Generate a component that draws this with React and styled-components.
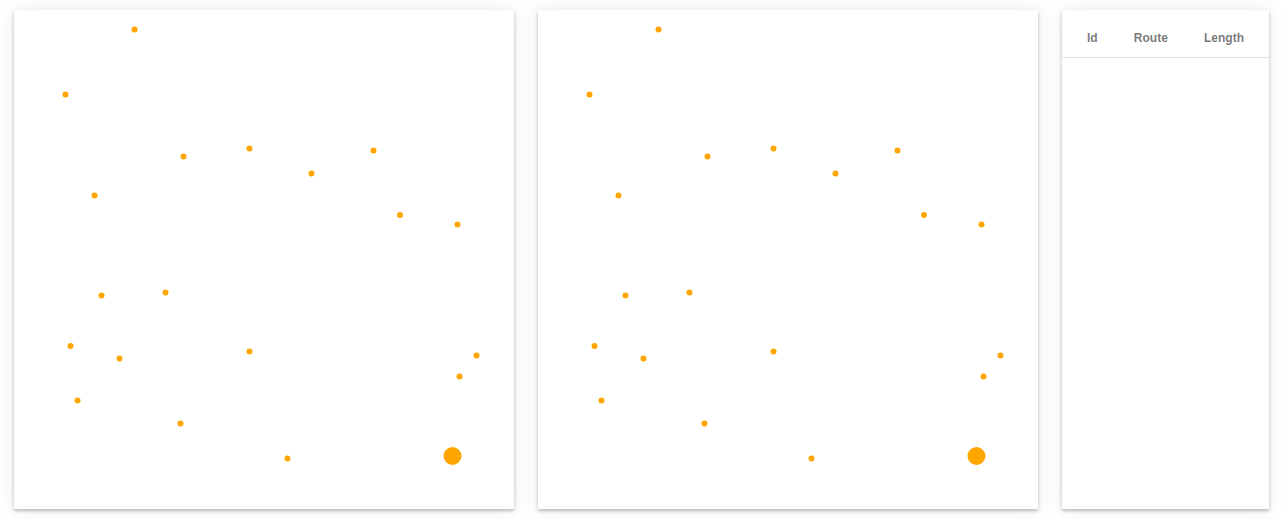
import React from "react";
import styled, { createGlobalStyle } from "styled-components";

const Global = createGlobalStyle`
  html, body { margin: 0; padding: 0; background: #ffffff; }
  body { font-family: "Liberation Sans", Arial, sans-serif; }
`;

const Page = styled.div`
  display: flex;
  align-items: flex-start;
  gap: 24px;
  padding: 10px 14px;
`;

const Paper = styled.div`
  background: #ffffff;
  box-shadow: 0 2px 3px rgba(0, 0, 0, 0.22), 0 1px 6px rgba(0, 0, 0, 0.06), 0 0 22px rgba(0, 0, 0, 0.07);
  width: ${(p) => p.$w}px;
  height: 499px;
  flex: none;
`;

const Canvas = styled.svg`
  display: block;
`;

const HeaderRow = styled.div`
  display: flex;
  justify-content: space-between;
  align-items: center;
  box-sizing: border-box;
  height: 48px;
  padding: 8px 25px 0 25px;
  border-bottom: 1px solid #e0e0e0;
`;

const HeadCell = styled.span`
  font-family: "Liberation Sans", Arial, sans-serif;
  font-size: 12px;
  font-weight: 700;
  color: rgba(0, 0, 0, 0.54);
`;

const points = [
  [120.5, 19.5], [51.5, 84.5], [169.5, 146.5], [235.5, 138.5], [297.5, 163.5],
  [359.5, 140.5], [80.5, 185.5], [386, 205], [443.5, 214.5], [87.5, 285.5],
  [151.5, 282.5], [56.5, 336], [105.5, 348.5], [235.5, 341.5], [462.5, 345.5],
  [445.5, 366.5], [63.5, 390.5], [166.5, 413.5], [273.5, 448.5],
];

function Map() {
  return (
    <Paper $w={500}>
      <Canvas width="500" height="499" viewBox="0 0 500 499">
        {points.map(([x, y], i) => (
          <circle key={i} cx={x} cy={y} r="3" fill="#FFA500" />
        ))}
        <circle cx={438.5} cy={446} r="9" fill="#FFA500" />
      </Canvas>
    </Paper>
  );
}

export default function App() {
  return (
    <>
      <Global />
      <Page>
        <Map />
        <Map />
        <Paper $w={207}>
          <HeaderRow>
            <HeadCell>Id</HeadCell>
            <HeadCell>Route</HeadCell>
            <HeadCell>Length</HeadCell>
          </HeaderRow>
        </Paper>
      </Page>
    </>
  );
}
